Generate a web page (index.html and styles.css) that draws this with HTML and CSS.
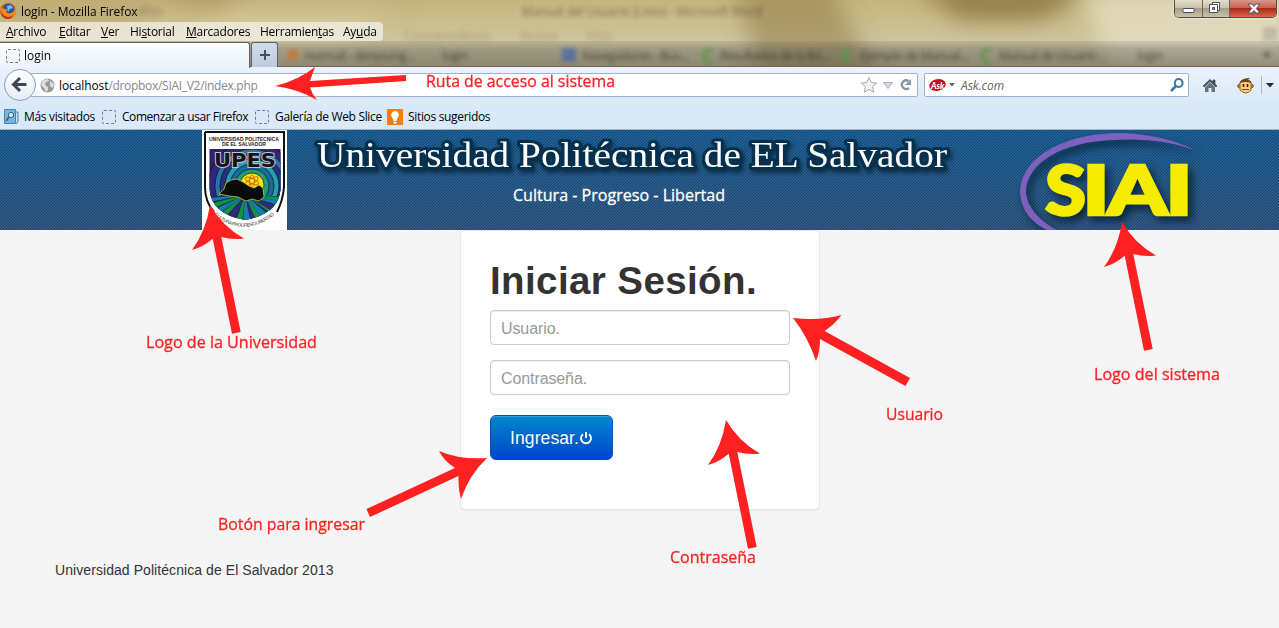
FILE: index.html
```html
<!DOCTYPE html>
<html lang="es">
<head>
<meta charset="utf-8">
<title>login</title>
<link rel="stylesheet" href="styles.css">
</head>
<body>
<div class="chrome">
  <div class="glass">
    <div class="ghosts" aria-hidden="true">
      <svg width="1279" height="67" viewBox="0 0 1279 67" font-family="Open Sans, sans-serif" font-size="12">
        <defs>
          <filter id="soft" x="-10%" y="-50%" width="120%" height="200%"><feGaussianBlur stdDeviation="2.300"/></filter>
          <filter id="haze" x="-30%" y="-50%" width="160%" height="200%"><feGaussianBlur stdDeviation="11"/></filter>
          <linearGradient id="tabshade" x1="0" y1="0" x2="0" y2="1"><stop offset="0" stop-color="#555" stop-opacity=".12"/><stop offset=".3" stop-color="#555" stop-opacity=".38"/><stop offset="1" stop-color="#4e4a42" stop-opacity=".5"/></linearGradient>
        </defs>
        <g filter="url(#haze)">
          <path d="M120-20H420L370 12H210z" fill="#a58c54" opacity=".55"/>
          <path d="M250-10H400L330 70H150z" fill="#e3d8ae" opacity=".4"/>
          <path d="M735-15H830L880 80H760z" fill="#8c7644" opacity=".5"/>
          <path d="M915-15H1100L1040 20H960z" fill="#806a38" opacity=".7"/>
          <path d="M1080-10H1290V65H1110z" fill="#e6dec4" opacity=".8"/>
          <path d="M0-10H150V30H0z" fill="#bba66e" opacity=".6"/>
        </g>
        <rect y="41" width="1279" height="26" fill="url(#tabshade)"/>
        <g filter="url(#soft)" fill="#333029" opacity=".75">
          <text x="138" y="15" opacity=".5">vlisu</text>
          <text x="522" y="16" textLength="240" opacity=".7">Manual del Usuario (Listo)  -  Microsoft Word</text>
          <text x="404" y="40" textLength="86" fill="#80642e" opacity=".5">Correspondencia</text>
          <text x="520" y="40" fill="#80642e" opacity=".5">Revisar</text>
          <text x="586" y="40" fill="#80642e" opacity=".5">Vista</text>
          <text x="304" y="60" textLength="110">Hotmail - denysung...</text>
          <text x="442" y="60">login</text>
          <text x="582" y="60" textLength="106">Navegadores - Bus...</text>
          <text x="720" y="60" textLength="110">Resultados de la Bú...</text>
          <text x="860" y="60" textLength="108">Ejemplo de Manual...</text>
          <text x="999" y="60" textLength="108">Manual de Usuario ...</text>
          <text x="1137" y="60">login</text>
          <path d="M1263 53h8l-4 5z"/>
          <circle cx="293" cy="55" r="6" fill="#c9742c"/>
          <rect x="562" y="48" width="14" height="14" fill="#4667aa"/>
          <g fill="none" stroke="#549a45" stroke-width="4"><path d="M713 50q-10 0-9 6t8 6M852 50q-10 0-9 6t8 6M991 50q-10 0-9 6t8 6"/></g>
          <rect x="1263" y="27" width="14" height="14" fill="#777" opacity=".4"/>
        </g>
      </svg>
    </div>
    <div class="titlebar">
      <svg width="17" height="18" viewBox="0 0 17 18"><circle cx="8" cy="10" r="8" fill="#d75a0c"/><circle cx="8.500" cy="8.500" r="5.800" fill="#2557a0"/><path d="M7 5l4-1 2 3-3 1-2 3z" fill="#7bbbe8"/><path d="M0 5q2 3 5 3 2 0 3 1l-2 1q1 3 5 2 4-1 4-7 4 10-4 12Q0 18 0 5z" fill="#f28b16"/><path d="M1 9q1 6 7 7 4 0 6-3-2 5-7 5Q1 17 1 9z" fill="#b53510"/></svg>
      <span class="window-name">login - Mozilla Firefox</span>
      <div class="window-buttons">
        <span class="wb"><svg width="27" height="17"><rect x="8" y="8.500" width="11" height="4" rx=".5" fill="#fff" stroke="#50505c"/></svg></span>
        <span class="wb"><svg width="26" height="17"><path d="M9.500 2.500h7v8h-7z" fill="#fff" stroke="#50505c"/><path d="M6.500 4.500h8v8h-8z" fill="#fff" stroke="#50505c"/><path d="M9.500 7.500h2v2h-2z" fill="#aaa" stroke="#50505c"/></svg></span>
        <span class="wb wb-close"><svg width="46" height="17"><path d="M18 4h4l2 2.500L26 4h4l-3.700 4.500L30 13h-4l-2-2.500L22 13h-4l3.700-4.500z" fill="#fff" stroke="#575059"/></svg></span>
      </div>
    </div>
    <nav class="menu">
      <span><u>A</u>rchivo</span><span><u>E</u>ditar</span><span><u>V</u>er</span><span>Hi<u>s</u>torial</span><span><u>M</u>arcadores</span><span>Herramien<u>t</u>as</span><span>Ay<u>u</u>da</span>
    </nav>
    <div class="tabs">
      <div class="tab"><i class="blank-icon"></i><span>login</span></div>
      <div class="new-tab"><svg width="12" height="12"><path d="M6 1v10M1 6h10" stroke="#44505e" stroke-width="2"/></svg></div>
    </div>
  </div>
  <div class="toolbar">
    <div class="back"><svg width="20" height="20" viewBox="0 0 20 20"><path d="M10 3L3.500 9.500l6.500 6.500M4 9.500H16.500" fill="none" stroke="#3c4854" stroke-width="3"/></svg></div>
    <div class="address">
      <svg width="15" height="15" viewBox="0 0 15 15"><circle cx="7.500" cy="7.500" r="7" fill="#999"/><path d="M3 2l5-1 1 2-3 1-1 3 3 2v3l-2 2-2-4-3-3zM10 3l4 3-1 4-3-2z" fill="#ddd"/></svg>
      <span class="url"><b>localhost</b>/dropbox/SIAI_V2/index.php</span>
      <svg class="address-tools" width="56" height="20" viewBox="0 0 56 20"><path d="M8 2.500l2.200 5 5.500.6-4.100 3.700 1.200 5.500-4.800-2.800-4.800 2.800 1.200-5.500-4.100-3.700 5.500-.6z" fill="#f3f3f3" stroke="#aaa"/><path d="M22.500 7.500h9L27 13.500z" fill="#d3dce8" stroke="#a8b3c0"/><path d="M47.500 6A4.300 4.300 0 1 0 48 13" fill="none" stroke="#8793a1" stroke-width="2.300"/><path d="M50 4v6h-6z" fill="#8793a1"/></svg>
    </div>
    <div class="search">
      <svg width="17" height="14" viewBox="0 0 17 14"><ellipse cx="8.500" cy="7" rx="8.300" ry="5.800" fill="#c80d12" transform="rotate(-12 8.500 7)"/><text x="2" y="10.500" font-family="Lato" font-weight="900" font-style="italic" font-size="8.500" textLength="13" fill="#fff">Ask</text></svg>
      <svg width="6" height="4"><path d="M0 0h6L3 3.500z" fill="#666"/></svg>
      <span class="hint">Ask.com</span>
      <svg class="lens" width="14" height="14" viewBox="0 0 14 14"><circle cx="8.700" cy="5" r="3.900" fill="none" stroke="#3877b5" stroke-width="2"/><path d="M6 8l-5 5" stroke="#3877b5" stroke-width="2.500"/></svg>
    </div>
    <svg class="home" width="16" height="15" viewBox="0 0 16 15"><path d="M8 1.500L1 8l1 1 6-5.500L14 9l1-1-2-2V2h-2v2z" fill="#3e4b58" stroke="#3e4b58" stroke-width=".7"/><path d="M3 9l5-4.500L13 9v5H9.500v-4h-3v4H3z" fill="#647282"/></svg>
    <svg class="monkey" width="17" height="17" viewBox="0 0 17 17"><circle cx="2.500" cy="9" r="1.800" fill="#d08b35" stroke="#805018"/><circle cx="14.500" cy="9" r="1.800" fill="#d08b35" stroke="#805018"/><path d="M3 5q5-4 11 0v8q-5 6-11 0z" fill="#f5d080" stroke="#996018"/><path d="M3 5q2-4 10-4l-2 2 3 1v2Q9 4 3 6z" fill="#73431d"/><path d="M6.500 7v3M10.500 7v3" stroke="#3a210c" stroke-width="1.600"/><path d="M5 12.500h7" stroke="#a23c1a"/></svg>
    <svg class="more" width="14" height="19"><path d="M.5 0v18" stroke="#aab8c8"/><path d="M5 7h8l-4 4.500z" fill="#24282d"/></svg>
  </div>
  <div class="bookmarks">
    <svg width="15" height="16" viewBox="0 0 15 16"><path d="M.5.5h11v14H.5z" fill="#78b4de" stroke="#4584b4"/><path d="M12 3h2v10l-2 2" fill="#c7e1f3" stroke="#4584b4"/><circle cx="7" cy="6" r="2.700" fill="#cce7f8" stroke="#2e6289"/><path d="M5 8l-3 4" stroke="#2e6289" stroke-width="1.500"/></svg>
    <span class="bm-most">Más visitados</span>
    <i class="blank-icon"></i><span class="bm-start">Comenzar a usar Firefox</span>
    <i class="blank-icon"></i><span class="bm-slice">Galería de Web Slice</span>
    <svg width="16" height="16" viewBox="0 0 16 16"><path d="M0 0h16v16H0z" fill="#f67c0b"/><path d="M8 2a4 4 0 0 0-2.500 7L6.500 12h3l1-3A4 4 0 0 0 8 2zM6.500 12.700h3V14l-1.500 1-1.500-1z" fill="#fff"/></svg>
    <span class="bm-sites">Sitios sugeridos</span>
  </div>
</div>

<header class="banner">
  <svg class="weave" width="1279" height="100"><defs><pattern id="twill" width="3" height="3" patternUnits="userSpaceOnUse"><path d="M2 0h1v1H2zM1 1h1v1H1zM0 2h1v1H0z" fill="#0a2444" fill-opacity=".48" shape-rendering="crispEdges"/></pattern></defs><rect width="1279" height="100" fill="url(#twill)"/></svg>
  <svg class="crest" width="85" height="100" viewBox="0 0 85 100">
    <defs><clipPath id="shield"><path d="M7.500 19H78.500V59Q77 84 43 90Q9 84 7.500 59z"/></clipPath><clipPath id="sky"><path d="M7 19h72v47H7z"/></clipPath></defs>
    <path d="M0 0h85v100H0z" fill="#fff"/>
    <path d="M3 2H82V57Q81 70 75 82M3 2V57Q3 72 12 82" fill="none" stroke="#111" stroke-width="2"/>
    <g font-family="Liberation Sans" font-weight="bold" font-size="5.800" fill="#222"><text x="7" y="11" textLength="70" lengthAdjust="spacingAndGlyphs">UNIVERSIDAD POLITECNICA</text><text x="20" y="16" textLength="44" lengthAdjust="spacingAndGlyphs">DE EL SALVADOR</text></g>
    <g clip-path="url(#shield)">
      <path d="M7 19h72v75H7z" fill="#29226f"/>
      <g clip-path="url(#sky)" stroke="#111" stroke-width=".7">
        <circle cx="50" cy="56" r="44" fill="#30277b"/><circle cx="50" cy="56" r="37" fill="#2876a9"/><circle cx="50" cy="56" r="32" fill="#243080"/><circle cx="50" cy="56" r="27" fill="#25a0b2"/><circle cx="50" cy="56" r="22" fill="#1869a0"/><circle cx="50" cy="56" r="17" fill="#219c73"/><circle cx="50" cy="55" r="12" fill="#f3e51b"/>
      </g>
      <path d="M7 66h72v28H7z" fill="#102f55"/>
      <g fill="#119340"><path d="M43 65L7 74v6zM43 65L15 86l6 4zM43 65L33 94h7zM43 65L55 93l6-3zM43 65L70 84l5-7zM43 65L79 71v-4z"/></g>
      <g fill="#167cb0"><path d="M43 65L7 82l5 5zM43 65L41 94h8zM43 65L62 91l6-5zM43 65L79 76v-5zM43 65L7 68v4z"/></g>
      <g fill="#352877"><path d="M43 65L23 90l8 3zM43 65L50 94l5-2zM43 65L75 84l3-6z"/></g>
    </g>
    <g fill="none" stroke="#d3680d" stroke-width=".9"><ellipse cx="50" cy="51" rx="7" ry="2.500" transform="rotate(25 50 51)"/><ellipse cx="50" cy="51" rx="7" ry="2.500" transform="rotate(-30 50 51)"/><ellipse cx="50" cy="51" rx="2.500" ry="6"/></g>
    <path d="M17 64l5-5 2-6 5-3 6-1 6 3 6 4 5 2 5-3 4 3 1 9-5 4-7-2-6 2-8-4-9-1z" fill="#090b0b" stroke="#e3df25" stroke-width=".7"/>
    <g font-family="DejaVu Sans" font-weight="bold" font-size="20"><text x="12" y="37" textLength="62" lengthAdjust="spacingAndGlyphs" fill="#14141c" stroke="#c4c4cc" stroke-width="2" paint-order="stroke">UPES</text></g>
    <path id="motto" d="M12 85Q43 110 76 82" fill="none"/><text font-family="Liberation Sans" font-size="4.800" fill="#333"><textPath href="#motto" textLength="66">CULTURA PROGRESO LIBERTAD</textPath></text>
  </svg>
  <svg class="names" width="660" height="100" viewBox="305 130 660 100">
    <text class="uni" x="317" y="167" textLength="630" lengthAdjust="spacingAndGlyphs">Universidad Politécnica de EL Salvador</text>
    <text class="creed" x="513" y="201" textLength="212" lengthAdjust="spacingAndGlyphs">Cultura - Progreso - Libertad</text>
  </svg>
  <svg class="siai" width="200" height="100" viewBox="1010 130 200 100">
    <path class="swoosh" d="M1195 150Q1160 133 1115 133C1058 135 1020 160 1020 193Q1022 219 1049 231H1058Q1028 214 1026 193C1025 164 1062 141 1115 140Q1160 137 1195 150z"/>
    <g class="siai-word"><text x="1045" y="214.500" textLength="41" lengthAdjust="spacingAndGlyphs">S</text><text x="1082" y="214.500" textLength="28" lengthAdjust="spacingAndGlyphs">I</text><text x="1107" y="214.500" textLength="61" lengthAdjust="spacingAndGlyphs">A</text><text x="1165" y="214.500" textLength="28" lengthAdjust="spacingAndGlyphs">I</text></g>
  </svg>
</header>

<main class="page">
  <form class="login">
    <h1>Iniciar Sesión.</h1>
    <input type="text" placeholder="Usuario.">
    <input type="password" placeholder="Contraseña.">
    <button type="button">Ingresar.<svg width="14" height="14" viewBox="0 0 14 14"><path d="M4 3.200a5 5 0 1 0 6 0M7 1v6" fill="none" stroke="#fff" stroke-width="1.900"/></svg></button>
  </form>
  <footer>Universidad Politécnica de El Salvador 2013</footer>
</main>

<svg class="notes" width="1279" height="628" viewBox="0 0 1279 628">
  <defs><path id="arrow" d="M0 0Q13 22 34 33.500Q22 35 11.300 32L30.700 127L22 128.700L2.700 33.700Q-7 42-18 45Q-4 26 0 0z"/></defs>
  <use href="#arrow" x="210" y="205"/>
  <use href="#arrow" x="1122" y="222"/>
  <use href="#arrow" x="726" y="420"/>
  <path d="M793 318Q820 321 841.500 315Q835 324 824.500 331L910 378L905.500 386L820 339Q820 352 816 361Q808 337 793 318z"/>
  <path d="M487 458Q460 460 439 451Q444 461 455 468L366.500 509L370 517L458.500 476Q458 489 461 499Q469 475 487 458z"/>
  <path d="M275 86Q299 80 315 67Q312 75 310 81L406 75V81L310 87.500Q312 94 317 100Q298 89 275 86z"/>
  <text x="426" y="87" textLength="189" lengthAdjust="spacingAndGlyphs">Ruta de acceso al sistema</text>
  <text x="146" y="348" textLength="171" lengthAdjust="spacingAndGlyphs">Logo de la Universidad</text>
  <text x="1094" y="380" textLength="126" lengthAdjust="spacingAndGlyphs">Logo del sistema</text>
  <text x="886" y="420" textLength="57" lengthAdjust="spacingAndGlyphs">Usuario</text>
  <text x="218" y="530" textLength="147" lengthAdjust="spacingAndGlyphs">Botón para ingresar</text>
  <text x="670" y="563" textLength="86" lengthAdjust="spacingAndGlyphs">Contraseña</text>
</svg>
</body>
</html>
```
FILE: styles.css
```css
* { box-sizing: border-box; }
body {
  margin: 0;
  height: 628px;
  overflow: hidden;
  position: relative;
  background: #f5f5f5;
  color: #333;
  font-family: "Liberation Sans", Arial, sans-serif;
}
svg { display: block; flex: none; }

/* Browser window */
.chrome {
  height: 130px;
  font-family: "Open Sans", "Noto Sans", sans-serif;
  font-size: 12px;
  letter-spacing: -0.25px;
  color: #000;
  white-space: nowrap;
}
.glass {
  position: relative;
  height: 67px;
  background: linear-gradient(#c5b47c, #cabd8c 30%, #cdc49d 58%, #cbc29d);
  border-bottom: 1px solid #71634d;
}
.ghosts { position: absolute; inset: 0; overflow: hidden; }
.titlebar, .menu, .tabs { position: relative; display: flex; }
.titlebar { height: 22px; align-items: flex-start; }
.titlebar > svg { margin-top: 1px; }
.window-name { margin: 3px 0 0 4px; line-height: 18px; letter-spacing: -0.07px; }
.window-buttons {
  display: flex;
  margin: 0 2px 0 auto;
  height: 18px;
  border: 1px solid #544d42;
  border-top: 0;
  border-radius: 0 0 5px 5px;
  overflow: hidden;
  box-shadow: 0 0 2px #fff;
}
.wb { background: linear-gradient(#e5dfce, #c9c1aa 45%, #a79e83 50%, #c9c1aa); border-right: 1px solid #6b6453; }
.wb-close { border: 0; background: linear-gradient(#d8978a, #c76350 45%, #ac2a15 50%, #d9684c); }
.menu {
  display: grid;
  grid-template-columns: 53px 42px 29px 56px 74px 83px 40px;
  width: 383px;
  height: 19px;
  padding-left: 6px;
  line-height: 20px;
  background: rgba(239, 237, 226, .82);
  border-radius: 0 4px 4px 0;
}
.menu u { text-underline-offset: 1px; }
.tabs { margin-top: 1px; height: 25px; gap: 1px; }
.tab {
  display: flex;
  align-items: center;
  gap: 4px;
  width: 250px;
  padding-left: 6px;
  letter-spacing: 0;
  background: linear-gradient(#fdfeff, #eaf2fc);
  border: 1px solid #5f6268;
  border-width: 1px 1px 0 0;
  border-radius: 0 3px 0 0;
  margin-bottom: -1px;
}
.new-tab {
  display: grid;
  place-items: center;
  width: 27px;
  background: linear-gradient(#d2dde9, #bccbdc);
  border: 1px solid #5f6268;
  border-bottom: 0;
  border-radius: 3px 3px 0 0;
}
.blank-icon { flex: none; width: 14px; height: 14px; border: 1px dashed #777; border-radius: 2px; }
.toolbar {
  display: flex;
  align-items: center;
  height: 36px;
  padding-left: 4px;
  background: linear-gradient(#ebf2fd, #dbe9f7);
}
.back {
  flex: none;
  display: grid;
  place-items: center;
  width: 32px;
  height: 32px;
  border: 1px solid #8b9cb1;
  border-radius: 50%;
  background: linear-gradient(#fff, #e6eef7);
  z-index: 1;
}
.address, .search {
  flex: none;
  display: flex;
  align-items: center;
  height: 24px;
  background: #fff;
  border: 1px solid #9fb3cf;
  border-radius: 2px;
}
.address { width: 891px; margin-left: -9px; padding-left: 12px; }
.url { margin-left: 4px; color: #888; letter-spacing: -0.3px; }
.url b { font-weight: normal; color: #000; letter-spacing: -0.1px; }
.address-tools { margin-left: auto; }
.search { width: 265px; margin-left: 6px; padding: 0 4px; }
.search svg + svg { margin-left: 3px; }
.hint { margin-left: 6px; font-style: italic; color: #666; letter-spacing: -0.05px; }
.search .lens { margin-left: auto; }
.home { margin-left: 13px; }
.monkey { margin-left: 19px; }
.more { margin-left: 7px; }
.bookmarks {
  display: flex;
  align-items: center;
  height: 27px;
  padding: 1px 0 0 4px;
  background: #dae9f8;
  border-bottom: 1px solid #9eb4ca;
}
.bookmarks span { letter-spacing: -0.33px; }
.bm-most { width: 78px; margin-left: 5px; }
.bm-start { width: 133px; margin-left: 6px; }
.bookmarks .bm-start { letter-spacing: -0.44px; }
.bm-slice { width: 112px; margin-left: 6px; }
.bm-sites { margin-left: 5px; }

/* University banner */
.banner {
  position: relative;
  display: flex;
  height: 100px;
  padding-left: 202px;
  background: linear-gradient(#1c639b, #335b84);
}
.weave { position: absolute; left: 0; top: 0; }
.crest, .names, .siai { position: relative; }
.names { margin-left: 18px; }
.siai { margin-left: 45px; }
.uni {
  font: 36px "Liberation Serif", serif;
  fill: #fff;
  stroke: #06314e;
  stroke-width: 6px;
  stroke-linejoin: round;
  paint-order: stroke;
  filter: drop-shadow(2px 3px 2px #0c2d47);
}
.creed { font: 17px "Open Sans", sans-serif; fill: #fff; stroke: #fff; stroke-width: .3px; }
.swoosh { fill: #7c62bd; filter: drop-shadow(4px 5px 4px #0b243c); }
.siai-word {
  font: 900 69px Lato, sans-serif;
  fill: #f5ec00;
  stroke: #f5ec00;
  stroke-width: 2.500px;
  filter: drop-shadow(4px 5px 4px #0b243c);
}

/* Login page */
.page { padding-left: 1px; }
.login {
  width: 360px;
  height: 280px;
  margin: 0 auto;
  padding: 29px;
  background: #fff;
  border: 1px solid #e5e5e5;
  border-radius: 5px;
  box-shadow: 0 1px 2px rgba(0, 0, 0, .05);
}
.login h1 { margin: 0 0 9px; padding-top: 1px; font-size: 38.5px; line-height: 40px; letter-spacing: .4px; white-space: nowrap; }
.login input {
  display: block;
  width: 300px;
  height: 35px;
  margin: 0 0 15px;
  padding: 8px 10px 6px;
  font: 16px "Liberation Sans", Arial, sans-serif;
  letter-spacing: -0.1px;
  border: 1px solid #ccc;
  border-radius: 4px;
  box-shadow: inset 0 1px 1px rgba(0, 0, 0, .075);
}
.login input::placeholder { color: #999; opacity: 1; }
.login button {
  display: flex;
  align-items: center;
  justify-content: center;
  width: 123px;
  height: 45px;
  margin-top: 20px;
  padding: 1px 0 0;
  font: 17.5px "Liberation Sans", Arial, sans-serif;
  letter-spacing: .1px;
  color: #fff;
  text-shadow: 0 -1px 0 rgba(0, 0, 0, .25);
  background: linear-gradient(#08c, #04c);
  border: 1px solid #0052b8;
  border-radius: 6px;
  box-shadow: inset 0 1px 0 rgba(255, 255, 255, .2), 0 1px 2px rgba(0, 0, 0, .05);
}
footer { margin: 50px 0 0 54px; font-size: 14px; line-height: 20px; letter-spacing: .07px; }

/* Callouts over the window */
.notes { position: absolute; left: 0; top: 0; fill: #ff2121; pointer-events: none; }
.notes text { font: 17px "Open Sans", sans-serif; stroke: #ff2121; stroke-width: .3px; }
```
